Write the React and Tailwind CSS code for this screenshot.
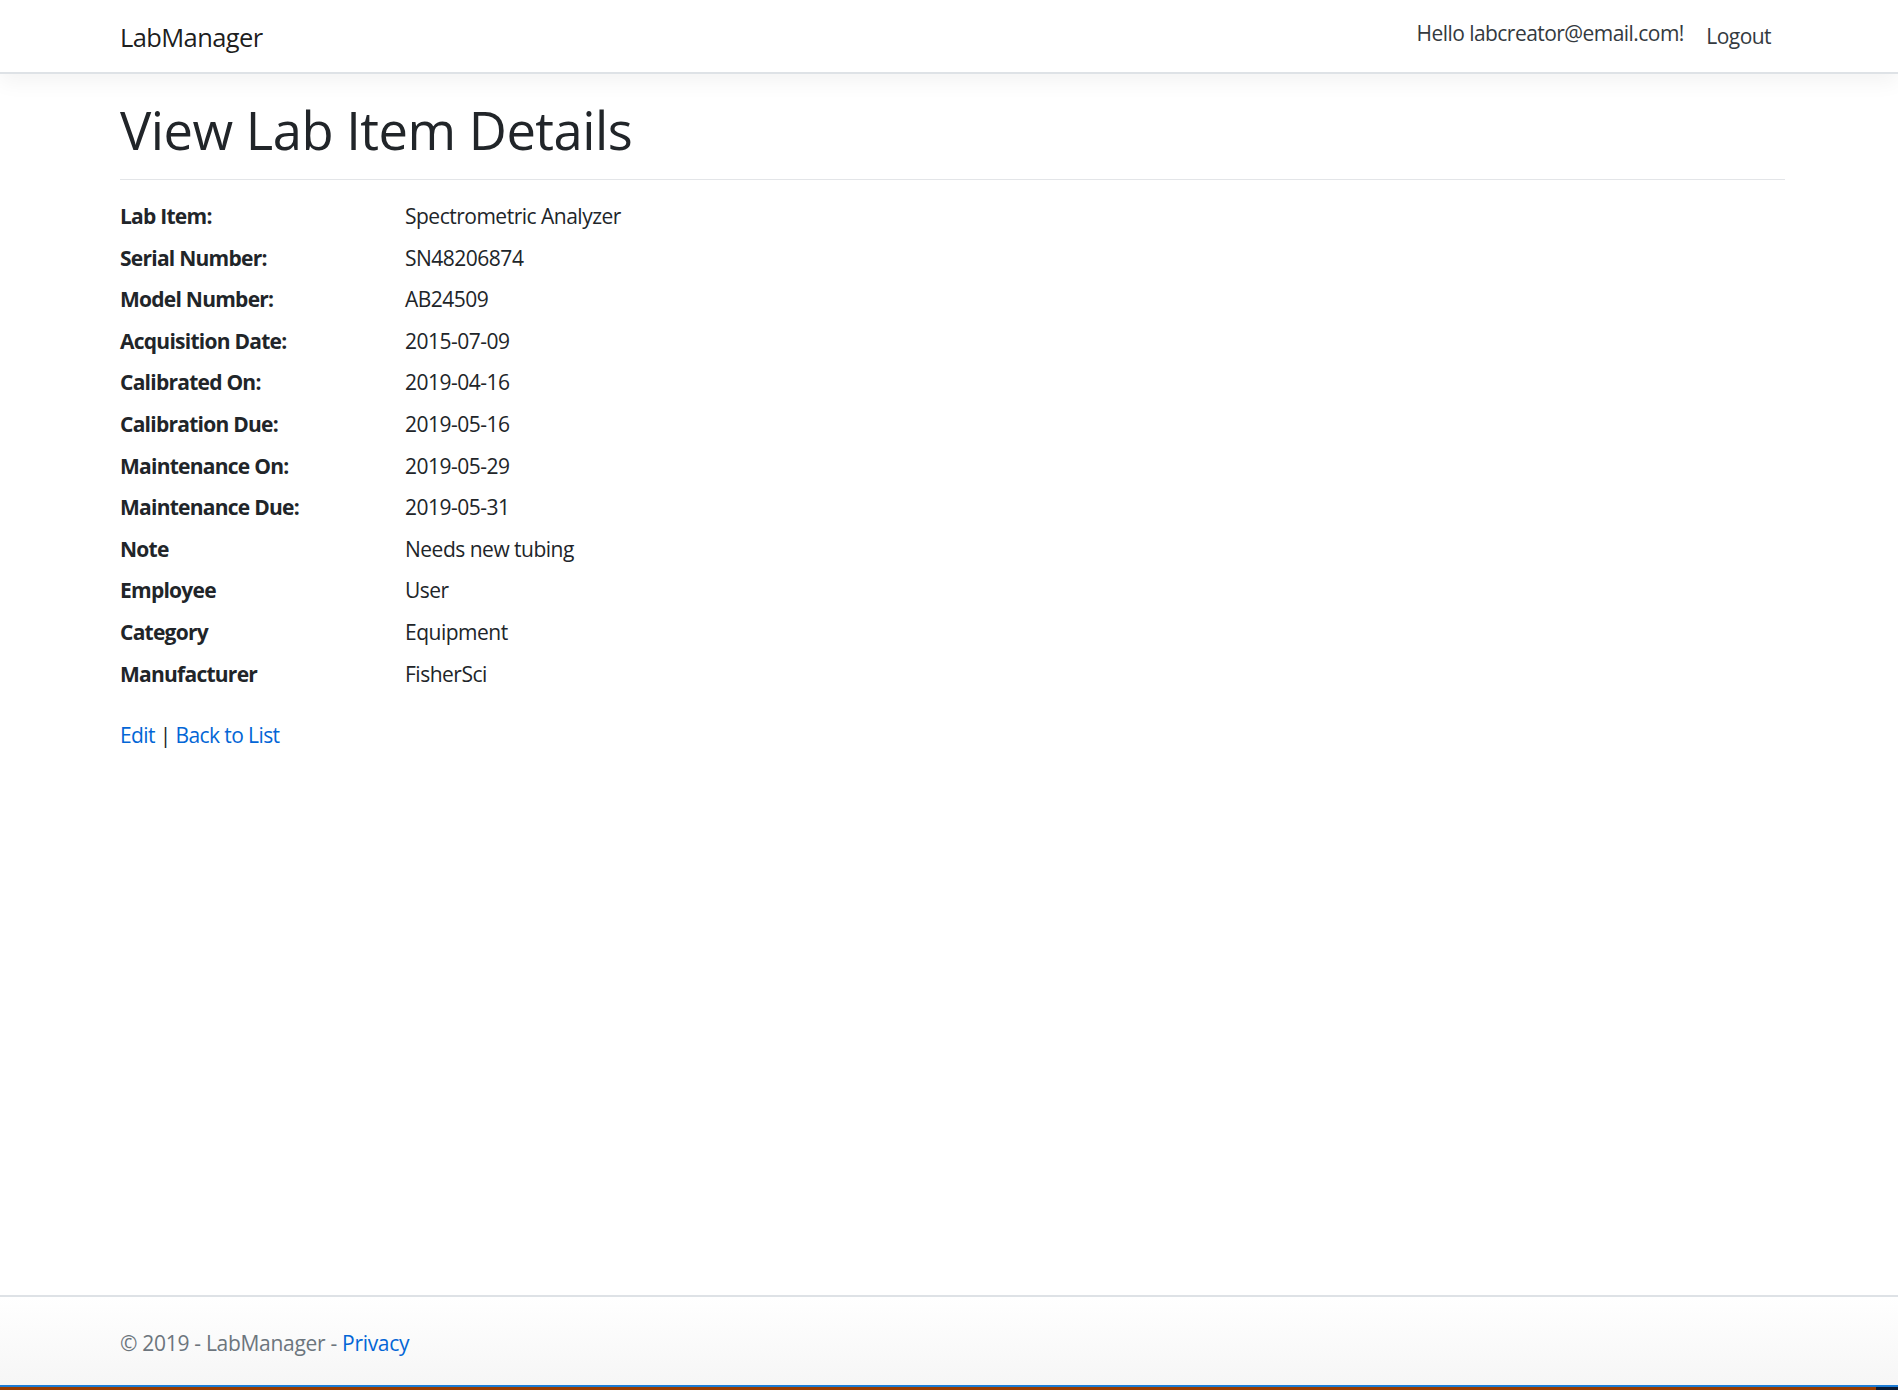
const details = [
  { label: "Lab Item:", value: "Spectrometric Analyzer" },
  { label: "Serial Number:", value: "SN48206874" },
  { label: "Model Number:", value: "AB24509" },
  { label: "Acquisition Date:", value: "2015-07-09" },
  { label: "Calibrated On:", value: "2019-04-16" },
  { label: "Calibration Due:", value: "2019-05-16" },
  { label: "Maintenance On:", value: "2019-05-29" },
  { label: "Maintenance Due:", value: "2019-05-31" },
  { label: "Note", value: "Needs new tubing" },
  { label: "Employee", value: "User" },
  { label: "Category", value: "Equipment" },
  { label: "Manufacturer", value: "FisherSci" },
];

export default function App() {
  return (
    <div className="h-[1390px] flex flex-col bg-white text-[#212529] font-['Open_Sans',sans-serif] overflow-hidden">
      {/* Navbar */}
      <header className="h-[74px] shrink-0 bg-white border-b-2 border-[#dee2e6] shadow-[0_8px_20px_rgba(0,0,0,0.05)] relative z-10">
        <div className="mx-auto w-[1710px] px-[26px] h-full flex items-center justify-between">
          <a className="text-[25.5px] tracking-[-0.6px] text-black/90 pt-[2px]">LabManager</a>
          <div className="flex items-center text-[21px] tracking-[-0.55px] text-[#343a40]">
            <a className="px-[10.5px] -mt-[4px]">Hello labcreator@email.com!</a>
            <button className="pl-[12px] pr-[7px] pt-[2px]">Logout</button>
          </div>
        </div>
      </header>

      {/* Main */}
      <main className="flex-1">
        <div className="mx-auto w-[1710px] px-[26px] pt-[21px]">
          <h1 className="text-[52.5px] leading-[63px] font-medium tracking-[-0.5px] pt-[3px]">View Lab Item Details</h1>
          <hr className="-mr-[7px] mt-[18px] mb-[21px] border-t border-[#e3e5e8]" />
          <dl className="text-[21px]">
            {details.map((d) => (
              <div key={d.label} className="flex h-[41.6px]">
                <dt className="w-[285px] font-bold tracking-[-0.75px] leading-[31.5px]">{d.label}</dt>
                <dd className="leading-[31.5px] tracking-[-0.5px]">{d.value}</dd>
              </div>
            ))}
          </dl>
          <div className="mt-[20px] text-[21px] leading-[31.5px] tracking-[-0.6px]">
            <a className="text-[#0366d6]">Edit</a> | <a className="text-[#0366d6]">Back to List</a>
          </div>
        </div>
      </main>

      {/* Footer */}
      <footer className="h-[90px] shrink-0 border-t-2 border-[#dee2e6] bg-gradient-to-b from-white to-[#f6f6f6]">
        <div className="mx-auto w-[1710px] px-[26px] h-full flex items-center pt-[6px] text-[21px] tracking-[-0.3px] text-[#6c757d]">
          <span>
            © 2019 - LabManager - <a className="text-[#0366d6]">Privacy</a>
          </span>
        </div>
      </footer>

      {/* Bottom status strip */}
      <div className="shrink-0 h-[2px] bg-[#1c7cd6]" />
      <div className="shrink-0 h-[3px] flex">
        <div className="flex-1 bg-[#993d00]" />
        <div className="w-[22px] bg-[#0b1a33]" />
      </div>
    </div>
  );
}
